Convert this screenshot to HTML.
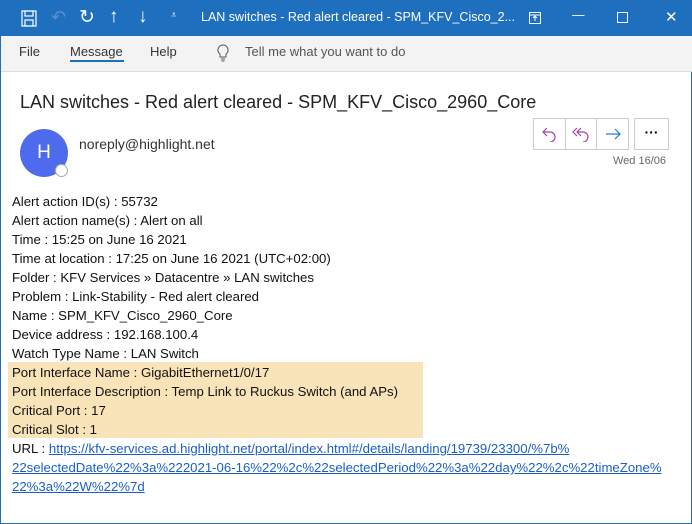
<!DOCTYPE html>
<html><head><style>
*{margin:0;padding:0;box-sizing:border-box}
body{width:692px;height:524px;overflow:hidden;background:#fff;font-family:"Liberation Sans",sans-serif;position:relative;border:1px solid #1e6fbd}
.tb{position:absolute;left:0;top:0;width:692px;height:35px;background:#1e6fbd;color:#fff}
.tb span{position:absolute;top:9px;font-size:12.5px}
.rb{position:absolute;left:0;top:35px;width:692px;height:36px;background:#f3f3f3;border-bottom:1px solid #ddd;font-size:13px;color:#333}
.rb span{position:absolute;top:8px}
.subj{position:absolute;left:19px;top:91px;font-size:18px;color:#222}
.av{position:absolute;left:19px;top:128px;width:48px;height:48px;border-radius:50%;background:#4f6bed;color:#fff;font-size:19px;text-align:center;line-height:48px}
.dot{position:absolute;left:54px;top:163px;width:13px;height:13px;border-radius:50%;background:#fff;border:1px solid #aaa}
.from{position:absolute;left:78px;top:135px;font-size:14px;color:#333}
.btns{position:absolute;left:532px;top:117px;width:96px;height:32px;border:1px solid #ccc;display:flex}
.btns div{flex:1;border-right:1px solid #ccc;display:flex;align-items:center;justify-content:center}
.btns div:last-child{border-right:none}
.more{position:absolute;left:633px;top:117px;width:35px;height:32px;border:1px solid #ccc;text-align:center;line-height:26px;font-weight:bold;font-size:14px}
.date{position:absolute;left:612px;top:154px;font-size:11px;color:#666}
.body{position:absolute;left:11px;top:191px;font-size:13.2px;line-height:19px;color:#111;white-space:nowrap}
.hl{position:absolute;left:7px;top:361px;width:415px;height:76px;background:#f9e3b8}
a{color:#1a5fc7;text-decoration:underline}
</style></head><body>
<div class="tb">
<svg style="position:absolute;left:20px;top:9px" width="16" height="17" fill="none" stroke="#fff" stroke-width="1.2"><rect x="1" y="1" width="14" height="15"/><rect x="4" y="1" width="8" height="5"/><rect x="4" y="10" width="8" height="6"/></svg>
<span style="left:50px;top:6px;font-size:18px;color:#5c8fd0">↶</span>
<span style="left:78px;top:5px;font-size:19px">↻</span>
<span style="left:108px;top:5px;font-size:19px">↑</span>
<span style="left:137px;top:5px;font-size:19px">↓</span>
<span style="left:170px;top:9px;font-size:10px">⩡</span>
<span style="left:200px">LAN switches - Red alert cleared - SPM_KFV_Cisco_2...</span>
<svg style="position:absolute;left:528px;top:11px" width="12" height="12" fill="none" stroke="#fff"><rect x=".5" y=".5" width="11" height="11"/><path d="M6 9V4M4 6l2-2 2 2M.5 3h11"/></svg>
<span style="left:571px;top:7px">—</span>
<svg style="position:absolute;left:616px;top:11px" width="11" height="11" fill="none" stroke="#fff"><rect x=".5" y=".5" width="10" height="10"/></svg>
<span style="left:664px;top:7px;font-size:15px">✕</span>
</div>
<div class="rb">
<span style="left:18px">File</span>
<span style="left:69px">Message</span>
<div style="position:absolute;left:69px;top:24px;width:54px;height:2px;background:#1e6fbd"></div>
<span style="left:149px">Help</span>
<svg style="position:absolute;left:216px;top:8px" width="12" height="18" fill="none" stroke="#555"><path d="M6 1a5 5 0 0 0-3 9v3h6v-3a5 5 0 0 0-3-9zM4 15h4M4.5 17h3"/></svg>
<span style="left:244px;color:#555">Tell me what you want to do</span>
</div>
<div class="subj">LAN switches - Red alert cleared - SPM_KFV_Cisco_2960_Core</div>
<div class="av">H</div><div class="dot"></div>
<div class="from">noreply@highlight.net</div>
<div class="btns">
<div><svg width="16" height="16" fill="none" stroke="#a646a6" stroke-width="1.2"><path d="M6 2L2 6l4 4M2 6h7a5 5 0 0 1 0 10"/></svg></div>
<div><svg width="18" height="16" fill="none" stroke="#a646a6" stroke-width="1.2"><path d="M5 2L1 6l4 4M9 2L5 6l4 4M5 6h6a5 5 0 0 1 0 10"/></svg></div>
<div><svg width="16" height="14" fill="none" stroke="#2a7ac8" stroke-width="1.2"><path d="M1 7h14M10 2l5 5-5 5"/></svg></div>
</div>
<div class="more">···</div>
<div class="date">Wed 16/06</div>
<div class="hl"></div>
<div class="body">
Alert action ID(s) : 55732<br>Alert action name(s) : Alert on all<br>Time : 15:25 on June 16 2021<br>Time at location : 17:25 on June 16 2021 (UTC+02:00)<br>Folder : KFV Services » Datacentre » LAN switches<br>Problem : Link-Stability - Red alert cleared<br>Name : SPM_KFV_Cisco_2960_Core<br>Device address : 192.168.100.4<br>Watch Type Name : LAN Switch<br>Port Interface Name : GigabitEthernet1/0/17<br>Port Interface Description : Temp Link to Ruckus Switch (and APs)<br>Critical Port : 17<br>Critical Slot : 1<br>URL : <a>https://kfv-services.ad.highlight.net/portal/index.html#/details/landing/19739/23300/%7b%</a><br><a>22selectedDate%22%3a%222021-06-16%22%2c%22selectedPeriod%22%3a%22day%22%2c%22timeZone%</a><br><a>22%3a%22W%22%7d</a>
</div>
</body></html>
